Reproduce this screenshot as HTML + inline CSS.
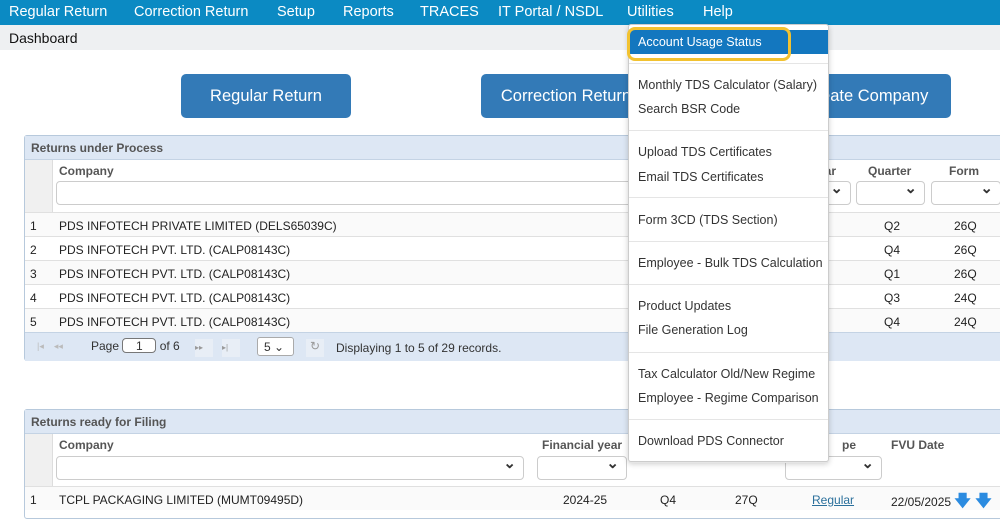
<html><head><style>
*{box-sizing:border-box;margin:0;padding:0}
body{width:1000px;height:511px;overflow:hidden;background:#fff;font-family:"Liberation Sans",sans-serif;position:relative}
.a{position:absolute}
.nav{left:0;top:0;width:1000px;height:25px;background:#0b8ac3;color:#fff;font-size:14.5px}
.nav span{position:absolute;top:4px;white-space:nowrap}
.crumb{left:0;top:25px;width:1000px;height:25px;background:#eef0f2;font-size:14px;padding:5px 9px;color:#111}
.btn{top:74px;height:44px;background:#337ab7;border-radius:5px;color:#fff;font-size:16.5px;text-align:center;line-height:44px;white-space:nowrap;overflow:hidden}
.panel{left:24px;width:990px;border:1px solid #b7c9dc;border-radius:3px;background:#fff}
.ph{height:24px;background:#dde7f4;border-bottom:1px solid #c4d3e4;font-size:12px;font-weight:bold;color:#555;padding:5px 6px}
.hdr{position:absolute;font-size:12px;font-weight:bold;color:#555}
.sel{position:absolute;height:24px;border:1px solid #ccc;border-radius:4px;background:#fff}
.sel:after{content:"⌄";position:absolute;right:7px;top:-3px;font-size:15px;color:#333;font-weight:bold}
.row{position:absolute;left:0;width:990px;height:24px;border-top:1px solid #e0e0e0;font-size:12px;color:#222;background:#fafafa}
.row span{position:absolute;top:6px;white-space:nowrap}
.menu{left:628px;top:24px;width:201px;height:438px;background:#fff;border:1px solid #ccc;border-radius:3px;box-shadow:0 2px 6px rgba(0,0,0,.2);font-family:"Liberation Sans",sans-serif;font-size:12.5px;color:#333}
.menu div.i{position:absolute;left:9px;white-space:nowrap}
.menu hr{position:absolute;left:0;width:199px;border:0;border-top:1px solid #e5e5e5}
</style></head><body>
<div class="a nav"><span style="left:9px">Regular Return</span><span style="left:134px">Correction Return</span><span style="left:277px">Setup</span><span style="left:343px">Reports</span><span style="left:420px">TRACES</span><span style="left:498px">IT Portal / NSDL</span><span style="left:627px">Utilities</span><span style="left:703px">Help</span></div>
<div class="a crumb">Dashboard</div>
<div class="a btn" style="left:181px;width:170px">Regular Return</div>
<div class="a btn" style="left:481px;width:170px">Correction Return</div>
<div class="a btn" style="left:781px;width:170px">Create Company</div>

<div class="a panel" style="top:135px;height:226px">
<div class="ph">Returns under Process</div>
<div class="a" style="left:0;top:24px;width:28px;height:52px;background:#f0f0f0;border-right:1px solid #ddd"></div>
<div class="hdr" style="left:34px;top:28px">Company</div>
<div class="hdr" style="left:793px;top:28px">ear</div>
<div class="hdr" style="left:843px;top:28px">Quarter</div>
<div class="hdr" style="left:924px;top:28px">Form</div>
<div class="sel" style="left:31px;top:45px;width:600px"></div>
<div class="sel" style="left:760px;top:45px;width:66px"></div>
<div class="sel" style="left:831px;top:45px;width:69px"></div>
<div class="sel" style="left:906px;top:45px;width:70px"></div>
<div class="row" style="top:76px"><span style="left:5px">1</span><span style="left:34px">PDS INFOTECH PRIVATE LIMITED (DELS65039C)</span><span style="left:859px">Q2</span><span style="left:929px">26Q</span></div>
<div class="row" style="top:100px;background:#fff"><span style="left:5px">2</span><span style="left:34px">PDS INFOTECH PVT. LTD. (CALP08143C)</span><span style="left:859px">Q4</span><span style="left:929px">26Q</span></div>
<div class="row" style="top:124px"><span style="left:5px">3</span><span style="left:34px">PDS INFOTECH PVT. LTD. (CALP08143C)</span><span style="left:859px">Q1</span><span style="left:929px">26Q</span></div>
<div class="row" style="top:148px;background:#fff"><span style="left:5px">4</span><span style="left:34px">PDS INFOTECH PVT. LTD. (CALP08143C)</span><span style="left:859px">Q3</span><span style="left:929px">24Q</span></div>
<div class="row" style="top:172px"><span style="left:5px">5</span><span style="left:34px">PDS INFOTECH PVT. LTD. (CALP08143C)</span><span style="left:859px">Q4</span><span style="left:929px">24Q</span></div>
<div class="a" style="left:0;top:196px;width:990px;height:29px;background:#dde7f4;border-top:1px solid #c4d3e4;font-size:12px;color:#333">
<span class="a" style="left:12px;top:8px;color:#bbb;font-size:9px">|◂&nbsp;&nbsp;&nbsp;&nbsp;◂◂</span>
<span class="a" style="left:66px;top:5px">Page <span style="display:inline-block;width:34px;height:15px;border:1px solid #777;border-radius:4px;text-align:center;background:#fff">1</span> of 6</span>
<span class="a" style="left:170px;top:6px;width:18px;height:18px;background:#e8eef6;color:#999;font-size:8px;padding-top:4px">▸▸</span>
<span class="a" style="left:197px;top:6px;width:18px;height:18px;background:#e8eef6;color:#999;font-size:8px;padding-top:4px">▸|</span>
<span class="a" style="left:232px;top:4px;width:37px;height:19px;border:1px solid #aaa;border-radius:3px;background:#fff;padding:2px 6px">5 ⌄</span>
<span class="a" style="left:281px;top:6px;width:18px;height:18px;background:#e8eef6;color:#999;text-align:center">↻</span>
<span class="a" style="left:311px;top:8px">Displaying 1 to 5 of 29 records.</span>
</div>
</div>

<div class="a panel" style="top:409px;height:110px">
<div class="ph">Returns ready for Filing</div>
<div class="a" style="left:0;top:24px;width:28px;height:52px;background:#f0f0f0;border-right:1px solid #ddd"></div>
<div class="hdr" style="left:34px;top:28px">Company</div>
<div class="hdr" style="left:517px;top:28px">Financial year</div>
<div class="hdr" style="left:817px;top:28px">pe</div>
<div class="hdr" style="left:866px;top:28px">FVU Date</div>
<div class="sel" style="left:31px;top:46px;width:468px"></div>
<div class="sel" style="left:512px;top:46px;width:90px"></div>
<div class="sel" style="left:760px;top:46px;width:97px"></div>
<div class="row" style="top:76px"><span style="left:5px">1</span><span style="left:34px">TCPL PACKAGING LIMITED (MUMT09495D)</span><span style="left:538px">2024-25</span><span style="left:635px">Q4</span><span style="left:710px">27Q</span><span style="left:787px;color:#2a6f9b;text-decoration:underline">Regular</span><span style="left:866px;top:3px">22/05/2025 <b style="color:#2b8be0;font-size:16px">🡇 🡇</b></span></div>
</div>

<div class="a menu">
<div class="a" style="left:1px;top:5px;width:198px;height:24px;background:#1377bf"></div>
<div class="a" style="left:-2px;top:2px;width:164px;height:34px;border:3px solid #f2c230;border-radius:8px"></div>
<div class="i" style="top:10px;color:#fff">Account Usage Status</div>
<hr style="top:38px">
<div class="i" style="top:53px">Monthly TDS Calculator (Salary)</div>
<div class="i" style="top:77px">Search BSR Code</div>
<hr style="top:105px">
<div class="i" style="top:120px">Upload TDS Certificates</div>
<div class="i" style="top:145px">Email TDS Certificates</div>
<hr style="top:172px">
<div class="i" style="top:188px">Form 3CD (TDS Section)</div>
<hr style="top:216px">
<div class="i" style="top:231px">Employee - Bulk TDS Calculation</div>
<hr style="top:259px">
<div class="i" style="top:274px">Product Updates</div>
<div class="i" style="top:298px">File Generation Log</div>
<hr style="top:327px">
<div class="i" style="top:342px">Tax Calculator Old/New Regime</div>
<div class="i" style="top:366px">Employee - Regime Comparison</div>
<hr style="top:394px">
<div class="i" style="top:409px">Download PDS Connector</div>
<hr style="top:437px">
</div>
</body></html>
